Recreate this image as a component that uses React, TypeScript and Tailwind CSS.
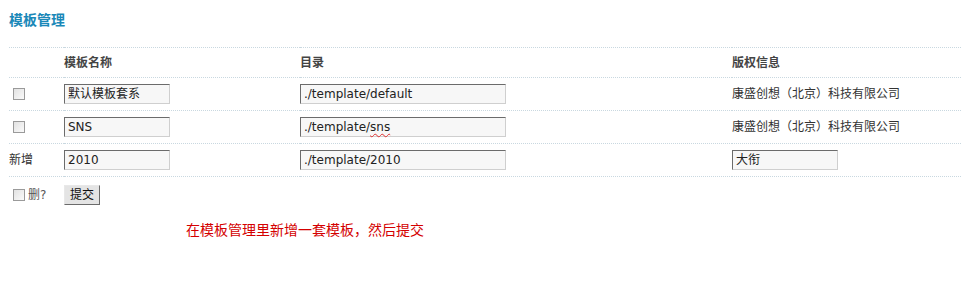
import React from "react";

const font = { fontFamily: '"DejaVu Sans", "Noto Sans CJK SC", sans-serif' };

function Input({ value, w, spell }: { value: string; w: string; spell?: boolean }) {
  return (
    <div
      className={`${w} h-[20px] flex items-center pl-[3px] bg-[#f7f7f7] border border-t-[#6b6b6b] border-l-[#6b6b6b] border-b-[#cfcfcf] border-r-[#cfcfcf] text-[12px] text-[#222] leading-none`}
    >
      {spell ? (
        <span>
          ./template/<span className="underline decoration-wavy decoration-[#e03030] decoration-1 underline-offset-2">sns</span>
        </span>
      ) : (
        <span>{value}</span>
      )}
    </div>
  );
}

function Check() {
  return <div className="w-[12px] h-[12px] border border-[#9a9a9a] bg-gradient-to-br from-[#e2e2e2] to-[#fafafa]" />;
}

export default function App() {
  const row = "h-[33px] border-t border-dotted border-[#c9d8e0]";
  return (
    <div className="w-[961px] h-[283px] bg-white text-[#333] text-[12px]" style={font}>
      <div className="pl-[9px] pt-[10px] h-[47px] text-[14px] font-bold text-[#1a88b8]">模板管理</div>
      <table className="ml-[9px] w-[952px] border-collapse">
        <tbody>
          <tr className="h-[30px] border-t border-dotted border-[#c9d8e0] text-[#444] font-bold">
            <td className="w-[55px]"></td>
            <td className="w-[236px]">模板名称</td>
            <td className="w-[432px]">目录</td>
            <td>版权信息</td>
          </tr>
          <tr className={row}>
            <td className="pl-[4px]"><Check /></td>
            <td><Input value="默认模板套系" w="w-[106px]" /></td>
            <td><Input value="./template/default" w="w-[206px]" /></td>
            <td>康盛创想（北京）科技有限公司</td>
          </tr>
          <tr className={row}>
            <td className="pl-[4px]"><Check /></td>
            <td><Input value="SNS" w="w-[106px]" /></td>
            <td><Input value="./template/sns" w="w-[206px]" spell /></td>
            <td>康盛创想（北京）科技有限公司</td>
          </tr>
          <tr className={row}>
            <td>新增</td>
            <td><Input value="2010" w="w-[106px]" /></td>
            <td><Input value="./template/2010" w="w-[206px]" /></td>
            <td><Input value="大衔" w="w-[106px]" /></td>
          </tr>
          <tr className="h-[36px] border-t border-dotted border-[#c9d8e0]">
            <td className="pl-[4px]">
              <div className="flex items-center gap-[3px] text-[#555]">
                <Check />
                <span>删?</span>
              </div>
            </td>
            <td>
              <div className="w-[36px] h-[20px] flex items-center justify-center bg-[#e4e4e4] border border-t-[#e8e8e8] border-l-[#e8e8e8] border-b-[#6b6b6b] border-r-[#6b6b6b] text-[#111]">
                提交
              </div>
            </td>
            <td></td>
            <td></td>
          </tr>
        </tbody>
      </table>
      <div className="pl-[186px] pt-[7px] text-[14px] text-[#d40000]">在模板管理里新增一套模板，然后提交</div>
    </div>
  );
}
